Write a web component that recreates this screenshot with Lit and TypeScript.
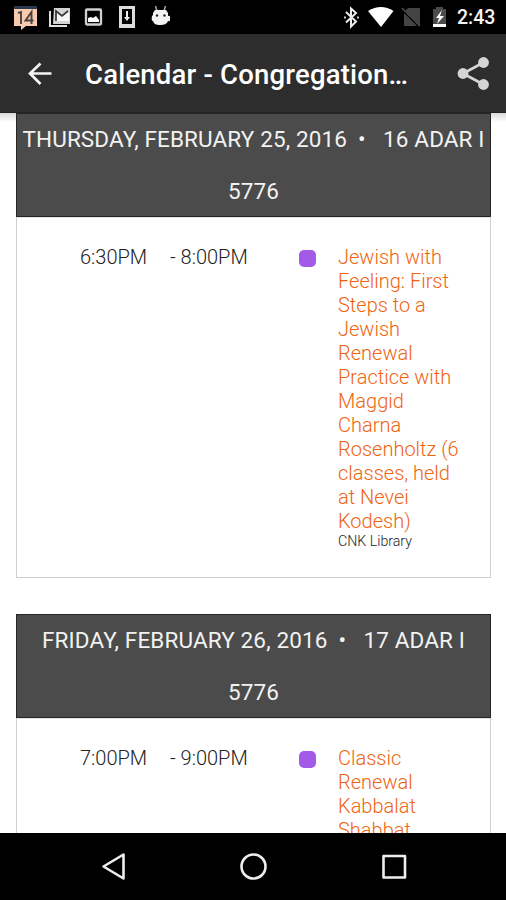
import { LitElement, html, css, svg } from "lit";
import { customElement, property } from "lit/decorators.js";

interface CalendarEvent {
  start: string;
  end: string;
  title: string[];
  place?: string;
}

interface Day {
  cls: string;
  date: string;
  hebrew: string;
  year: string;
  event: CalendarEvent;
}

const days: Day[] = [
  {
    cls: "thursday",
    date: "THURSDAY, FEBRUARY 25, 2016",
    hebrew: "16 ADAR I",
    year: "5776",
    event: {
      start: "6:30PM",
      end: "- 8:00PM",
      title: [
        "Jewish with", "Feeling: First", "Steps to a", "Jewish", "Renewal",
        "Practice with", "Maggid", "Charna", "Rosenholtz (6", "classes, held",
        "at Nevei", "Kodesh)",
      ],
      place: "CNK Library",
    },
  },
  {
    cls: "friday",
    date: "FRIDAY, FEBRUARY 26, 2016",
    hebrew: "17 ADAR I",
    year: "5776",
    event: {
      start: "7:00PM",
      end: "- 9:00PM",
      title: ["Classic", "Renewal", "Kabbalat", "Shabbat"],
    },
  },
];

@customElement("status-bar")
export class StatusBar extends LitElement {
  static styles = css`
    :host { display: flex; align-items: center; justify-content: space-between; height: 34px; background: #000; }
    svg { display: block; }
    .right { display: flex; align-items: center; }
    .clock { font: 500 19.500px/34px Roboto, sans-serif; color: #f4f4f4; width: 49px; padding-top: 2px; white-space: nowrap; }
  `;
  render() {
    return html`
      <svg width="180" height="34" viewBox="0 0 180 34">
        ${svg`
        <path d="M14 6h23v20H26l-5 4v-4h-7z" fill="#f7c9ae"/>
        <path d="M14 6h23v3H14z" fill="#2c3850"/>
        <path d="M18 13l3-1v12M31.500 24V12l-6 8.500h8" fill="none" stroke="#4a4240" stroke-width="1.900"/>
        <path d="M50 11v15h17" fill="none" stroke="#ddd" stroke-width="2"/>
        <path d="M54 8h16v16H53z" fill="#d4d4d4"/>
        <path d="M56 11l6 5 7-5v10H56z" fill="#f6f6f6"/>
        <path d="M56 21V11l6 5 6-5" fill="none" stroke="#333" stroke-width="1.700"/>
        <rect x="86" y="9.500" width="15" height="15" rx="1" fill="none" stroke="#d0d0d0" stroke-width="2.300"/>
        <path d="M88 22v-4l3-1 2 1 3-2 3 4v2z" fill="#fff"/>
        <path d="M119 6h16v22h-16zM122 9v15h10V9z" fill="#dcdcdc" fill-rule="evenodd"/>
        <path d="M127 11v7" stroke="#eee" stroke-width="2"/>
        <path d="M124 17h6l-3 4z" fill="#eee"/>
        <path d="M155.500 6l1.500 5M165.500 6l-1.500 5" stroke="#aaa" stroke-width="1.500"/>
        <path d="M155 10h11l2 3v3q2-1 2 1v3q0 2-2 1c-1 3-4 4-8 4s-6-1-7-4q-2 0-1-5l1-1v-2z" fill="#f4f4f4"/>
        <circle cx="157" cy="15.500" r="1.200" fill="#222"/><circle cx="164.500" cy="15.500" r="1.200" fill="#222"/>`}
      </svg>
      <div class="right">
        <svg width="127" height="34" viewBox="330 0 127 34">
          ${svg`
          <path d="M346 12l10 9.500-5 5V8.500l5 4.500-10 9.500" fill="none" stroke="#ededed" stroke-width="2"/>
          <path d="M345 16.500v2M358 16.500v2" stroke="#ccc" stroke-width="2"/>
          <path d="M368 11q13-8 25.500 0L381 27z" fill="#fff"/>
          <path d="M404 12l4-4h12v18h-16z" fill="#444"/>
          <path d="M402 9l18 18" stroke="#000" stroke-width="2.500"/>
          <path d="M402 8l18 18" stroke="#555" stroke-width="1.200"/>
          <path d="M433 9h3V7h7v2h3v15h-13z" fill="#4b4b4b"/>
          <path d="M433 24h13v3h-13z" fill="#fff"/>
          <path d="M442 10l-6 8h3l-2 6 7-8h-4z" fill="#fff"/>`}
        </svg>
        <span class="clock">2:43</span>
      </div>`;
  }
}

@customElement("title-bar")
export class TitleBar extends LitElement {
  static styles = css`
    :host { display: flex; align-items: center; height: 78px; background: #2d2d2d; border-bottom: 1px solid #222; }
    svg { display: block; flex: none; }
    .title { width: 371px; padding-top: 4px; font: 500 27.500px/32px Roboto, sans-serif; letter-spacing: 0.200px; color: #fff; white-space: nowrap; }
  `;
  render() {
    return html`
      <svg width="85" height="79" viewBox="0 34 85 79">
        ${svg`<path d="M51.500 73.500H30M40.500 63.500l-10.500 10 10.500 10.500" fill="none" stroke="#f4f4f4" stroke-width="2.700"/>`}
      </svg>
      <div class="title">Calendar - Congregation…</div>
      <svg width="50" height="79" viewBox="456 34 50 79">
        ${svg`<path d="M483.500 62.500l-20.500 11 20.500 11" fill="none" stroke="#d5d5d5" stroke-width="2.700"/>
        <circle cx="483.500" cy="62.500" r="5.400" fill="#d5d5d5"/><circle cx="463" cy="73.500" r="5.400" fill="#d5d5d5"/><circle cx="483.500" cy="84.500" r="5.400" fill="#d5d5d5"/>`}
      </svg>`;
  }
}

@customElement("day-card")
export class DayCard extends LitElement {
  @property({ attribute: false }) day!: Day;
  static styles = css`
    :host { display: block; width: 475px; font-family: Roboto, sans-serif; }
    .head { box-sizing: border-box; height: 104px; background: #4b4b4b; border: 1px solid #262626; color: #f2f2f2; font-size: 22.500px; letter-spacing: 0.130px; line-height: 52px; text-align: center; }
    .line { display: flex; justify-content: center; height: 52px; margin-top: -1px; white-space: nowrap; }
    .line + .line { margin-top: 0; }
    .dot { width: 36px; text-indent: 11px; text-align: left; }
    .body { box-sizing: border-box; height: 361px; border: 1px solid #d0d0d0; border-top-color: #e4e4e4; padding: 27px 0 0 63px; display: grid; grid-template-columns: 90px 129px 39px 130px; align-items: start; font-size: 20px; line-height: 24px; white-space: nowrap; }
    .time { color: #222; font-weight: 300; }
    .swatch { width: 17px; height: 17px; margin-top: 5px; border-radius: 5px; background: #a45ae8; }
    .title { color: #f0640f; font-weight: 300; }
    .place { color: #222; font-size: 14.200px; line-height: 16px; font-weight: 300; }
  `;
  render() {
    const { date, hebrew, year, event } = this.day;
    return html`
      <div class="head">
        <div class="line"><span>${date}</span><span class="dot">•</span><span>${hebrew}</span></div>
        <div class="line">${year}</div>
      </div>
      <div class="body">
        <span class="time">${event.start}</span>
        <span class="time">${event.end}</span>
        <span class="swatch"></span>
        <div>
          <div class="title">${event.title.map((t) => html`<div>${t}</div>`)}</div>
          <div class="place">${event.place ?? ""}</div>
        </div>
      </div>`;
  }
}

@customElement("nav-bar")
export class NavBar extends LitElement {
  static styles = css`
    :host { display: block; height: 67px; background: #000; }
    svg { display: block; }
  `;
  render() {
    return html`<svg width="506" height="67" viewBox="0 833 506 67">
      ${svg`<g fill="none" stroke="#eee" stroke-width="2.600" stroke-linejoin="round">
        <path d="M123.500 854.500v24l-20-12z"/>
        <circle cx="253.500" cy="866.500" r="12"/>
        <rect x="383.500" y="856" width="21.500" height="21.500"/>
      </g>`}
    </svg>`;
  }
}

@customElement("app-root")
export class AppRoot extends LitElement {
  static styles = css`
    :host { display: flex; flex-direction: column; width: 506px; height: 900px; background: #fff; overflow: hidden; }
    .content { height: 720px; box-sizing: border-box; padding-left: 16px; display: flex; flex-direction: column; gap: 36px; overflow: hidden; background: linear-gradient(#d8d8d8, #fff 9px); }
    day-card { flex: none; }
  `;
  render() {
    return html`
      <status-bar></status-bar>
      <title-bar></title-bar>
      <main class="content">${days.map((d) => html`<day-card class=${d.cls} .day=${d}></day-card>`)}</main>
      <nav-bar></nav-bar>`;
  }
}
